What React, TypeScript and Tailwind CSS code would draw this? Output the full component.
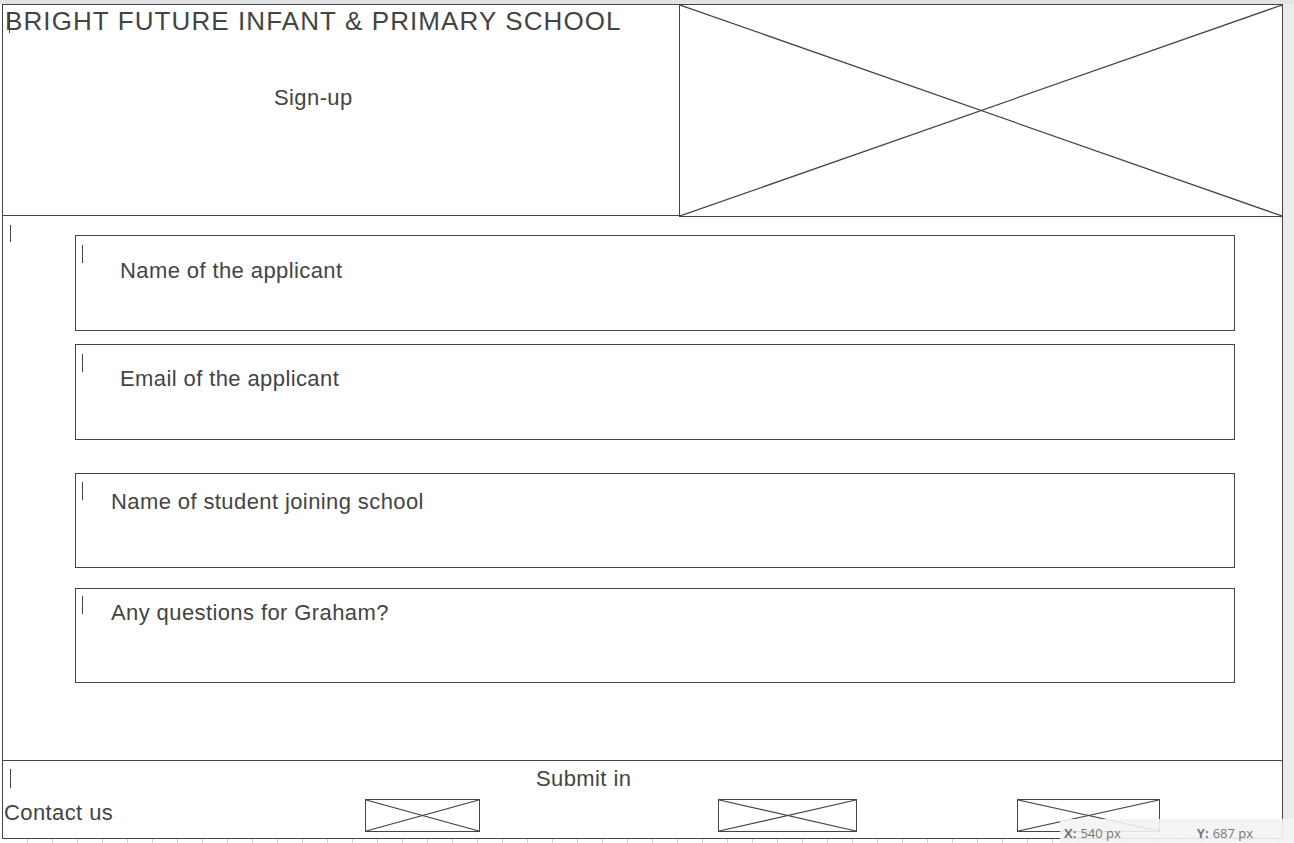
import React from "react";

function XBox({ className }: { className: string }) {
  return (
    <div className={"relative border border-[#444] " + className}>
      <svg className="absolute inset-0 w-full h-full" preserveAspectRatio="none" viewBox="0 0 100 100">
        <line x1="0" y1="0" x2="100" y2="100" stroke="#444" strokeWidth="1.2" vectorEffect="non-scaling-stroke" />
        <line x1="100" y1="0" x2="0" y2="100" stroke="#444" strokeWidth="1.2" vectorEffect="non-scaling-stroke" />
      </svg>
    </div>
  );
}

function Caret({ className }: { className: string }) {
  return <div className={"absolute w-px bg-[#444] " + className} />;
}

function Field({
  label,
  h,
  mt,
  pt,
  pl,
  caretTop,
}: {
  label: string;
  h: string;
  mt: string;
  pt: string;
  pl: string;
  caretTop: string;
}) {
  return (
    <div className={"relative ml-[72px] w-[1160px] border border-[#444] " + h + " " + mt + " " + pt + " " + pl}>
      <Caret className={"left-[6px] h-[18px] " + caretTop} />
      <div className="text-[22px] leading-[26px] tracking-[0.4px] text-[#444]">{label}</div>
    </div>
  );
}

export default function App() {
  const ticks = Array.from({ length: 52 });
  return (
    <div className="relative w-[1294px] h-[843px] overflow-hidden bg-white font-['Liberation_Sans',Arial,sans-serif] text-[#444]">
      <div className="h-[4px] bg-[#e3e3e3]" />
      <div className="flex h-[835px]">
        <div className="w-[2px]" />
        <div className="flex w-[1281px] flex-col border border-[#444]">
          {/* header */}
          <div className="flex h-[212px]">
            <div className="relative h-[211px] flex-1 border-b border-[#444] pl-[2px] pt-[1px]">
              <Caret className="left-[6px] top-[7px] h-[21px]" />
              <div className="text-[26px] leading-[30px] tracking-[1.1px] whitespace-nowrap">
                BRIGHT FUTURE INFANT &amp; PRIMARY SCHOOL
              </div>
              <div className="ml-[269px] mt-[49px] text-[22px] leading-[26px] tracking-[0.4px]">Sign-up</div>
            </div>
            <XBox className="h-[212px] w-[603px] border-t-0 border-r-0" />
          </div>
          {/* body */}
          <div className="relative h-[544px] border-b border-[#444] pt-[18px]">
            <Caret className="left-[7px] top-[8px] h-[17px]" />
            <Field label="Name of the applicant" h="h-[96px]" mt="mt-0" pt="pt-[22px]" pl="pl-[44px]" caretTop="top-[9px]" />
            <Field label="Email of the applicant" h="h-[96px]" mt="mt-[13px]" pt="pt-[21px]" pl="pl-[44px]" caretTop="top-[9px]" />
            <Field label="Name of student joining school" h="h-[95px]" mt="mt-[33px]" pt="pt-[15px]" pl="pl-[35px]" caretTop="top-[8px]" />
            <Field label="Any questions for Graham?" h="h-[95px]" mt="mt-[20px]" pt="pt-[11px]" pl="pl-[35px]" caretTop="top-[7px]" />
          </div>
          {/* footer */}
          <div className="relative flex-1 pt-[5px]">
            <Caret className="left-[7px] top-[8px] h-[19px]" />
            <div className="ml-[533px] text-[22px] leading-[26px] tracking-[0.4px]">Submit in</div>
            <div className="mt-[7px] flex items-start">
              <div className="ml-[1px] mt-[1px] text-[22px] leading-[26px] tracking-[0.4px] whitespace-nowrap">Contact us</div>
              <XBox className="ml-[252px] h-[33px] w-[115px]" />
              <XBox className="ml-[238px] h-[33px] w-[139px]" />
              <XBox className="ml-[160px] h-[33px] w-[143px]" />
            </div>
          </div>
        </div>
        <div className="flex-1 bg-[#ececec]" />
      </div>
      {/* ruler */}
      <div className="flex h-[4px] pl-[3px]">
        {ticks.map((_, i) => (
          <div key={i} className="h-full w-[25px] shrink-0 border-r border-[#cfcfcf]" />
        ))}
      </div>
      {/* coordinate tooltip */}
      <div className="absolute left-[1060px] top-[819px] flex h-[24px] w-[234px] items-center bg-[#f3f3f3]/90 pt-[6px] font-['Open_Sans',sans-serif] text-[13px] text-[#777]">
        <span className="ml-[4px] font-bold">X:</span>
        <span className="ml-[4px]">540 px</span>
        <span className="ml-[76px] font-bold">Y:</span>
        <span className="ml-[4px]">687 px</span>
      </div>
    </div>
  );
}
